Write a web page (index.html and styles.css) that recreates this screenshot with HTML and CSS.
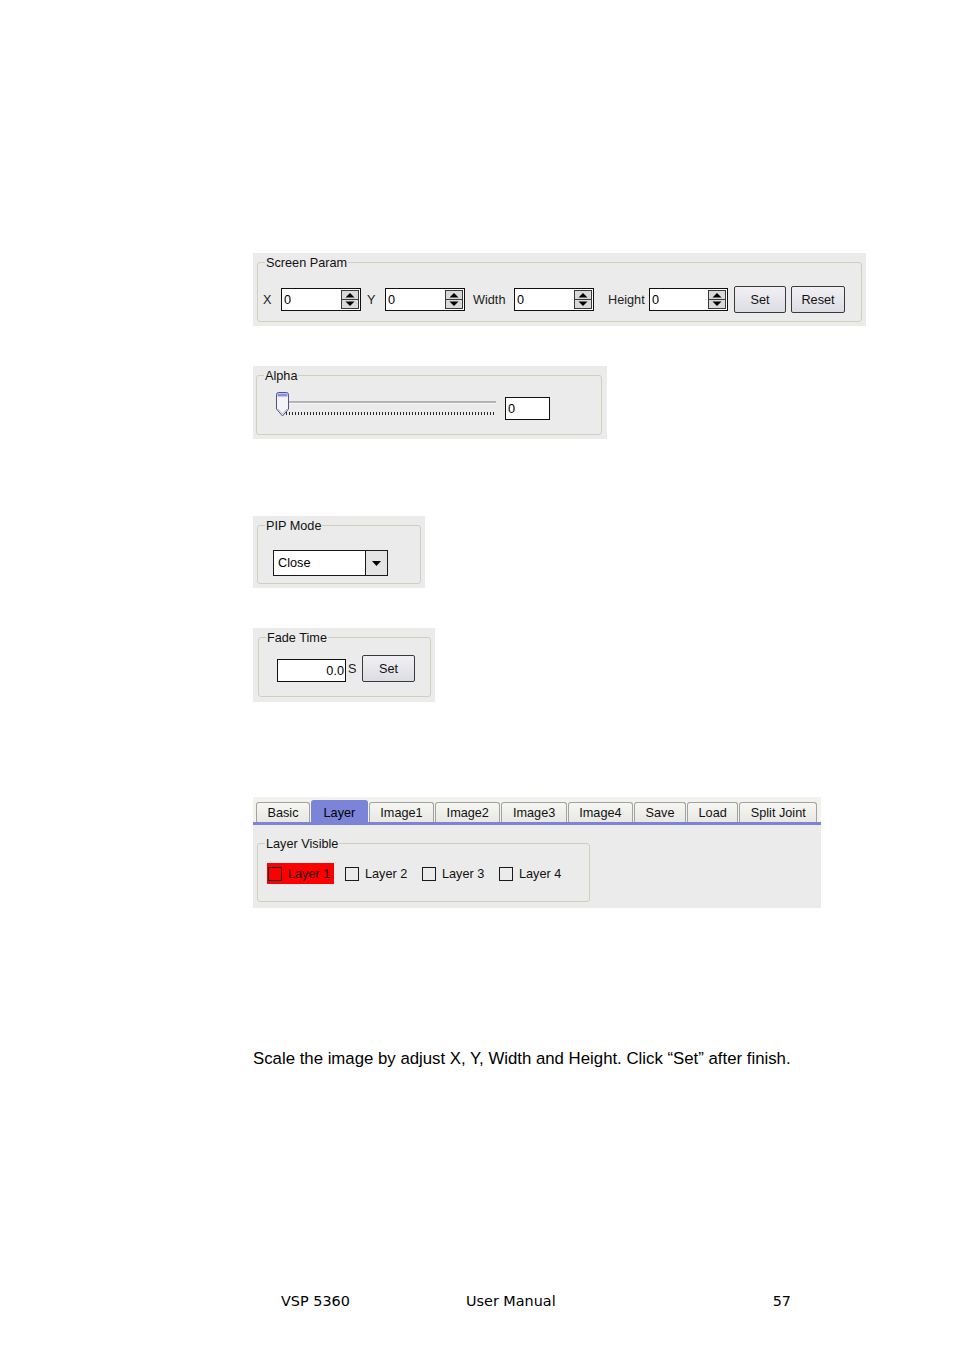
FILE: index.html
```html
<!DOCTYPE html>
<html>
<head>
<meta charset="utf-8">
<link rel="stylesheet" href="styles.css">
</head>
<body>
<div class="page">

  <div class="panel p1">
    <fieldset class="grp g1">
      <legend>Screen Param</legend>
      <div class="row r1">
        <span class="lbl lbl-x">X</span>
        <div class="spin-input w80 mr6"><span class="val">0</span>
          <svg class="spin" width="18" height="19" viewBox="0 0 18 19"><rect x="0.5" y="0.5" width="17" height="18" fill="#d9d9d9" stroke="#3a3a3a"/><line x1="0" y1="9.5" x2="18" y2="9.5" stroke="#3a3a3a"/><path d="M4.5 7.5 L9 3 L13.5 7.5 Z" fill="#000"/><path d="M4.5 11.5 L9 16 L13.5 11.5 Z" fill="#000"/></svg>
        </div>
        <span class="lbl lbl-y">Y</span>
        <div class="spin-input w80 mr8"><span class="val">0</span>
          <svg class="spin" width="18" height="19" viewBox="0 0 18 19"><rect x="0.5" y="0.5" width="17" height="18" fill="#d9d9d9" stroke="#3a3a3a"/><line x1="0" y1="9.5" x2="18" y2="9.5" stroke="#3a3a3a"/><path d="M4.5 7.5 L9 3 L13.5 7.5 Z" fill="#000"/><path d="M4.5 11.5 L9 16 L13.5 11.5 Z" fill="#000"/></svg>
        </div>
        <span class="lbl lbl-w">Width</span>
        <div class="spin-input w80 mr14"><span class="val">0</span>
          <svg class="spin" width="18" height="19" viewBox="0 0 18 19"><rect x="0.5" y="0.5" width="17" height="18" fill="#d9d9d9" stroke="#3a3a3a"/><line x1="0" y1="9.5" x2="18" y2="9.5" stroke="#3a3a3a"/><path d="M4.5 7.5 L9 3 L13.5 7.5 Z" fill="#000"/><path d="M4.5 11.5 L9 16 L13.5 11.5 Z" fill="#000"/></svg>
        </div>
        <span class="lbl lbl-h">Height</span>
        <div class="spin-input w79 mr6"><span class="val">0</span>
          <svg class="spin" width="18" height="19" viewBox="0 0 18 19"><rect x="0.5" y="0.5" width="17" height="18" fill="#d9d9d9" stroke="#3a3a3a"/><line x1="0" y1="9.5" x2="18" y2="9.5" stroke="#3a3a3a"/><path d="M4.5 7.5 L9 3 L13.5 7.5 Z" fill="#000"/><path d="M4.5 11.5 L9 16 L13.5 11.5 Z" fill="#000"/></svg>
        </div>
        <div class="btn b-set mr5">Set</div>
        <div class="btn b-reset">Reset</div>
      </div>
    </fieldset>
  </div>

  <div class="panel p2">
    <fieldset class="grp g2">
      <legend>Alpha</legend>
      <div class="row r2">
        <svg class="slider" width="221" height="25" viewBox="0 0 221 25">
          <line x1="13" y1="10" x2="220" y2="10" stroke="#b4b4b4" stroke-width="2"/>
          <line x1="13" y1="11.5" x2="220" y2="11.5" stroke="#f8f8f8" stroke-width="1"/>
          <line x1="7" y1="21.5" x2="218" y2="21.5" stroke="#2a2a2a" stroke-width="3" stroke-dasharray="1 2"/>
          <path d="M0.5 2.5 Q0.5 0.5 2.5 0.5 H10.5 Q12.5 0.5 12.5 2.5 V17 L6.5 24 L0.5 17 Z" fill="#f4f4f8" stroke="#50548a"/>
          <rect x="1.5" y="1.5" width="10" height="3" fill="#8a90e0"/>
          <path d="M2 17 L6.5 22 L11 17" fill="none" stroke="#b8bacc"/>
        </svg>
        <div class="text-input w45"><span class="val">0</span></div>
      </div>
    </fieldset>
  </div>

  <div class="panel p3">
    <fieldset class="grp g3">
      <legend>PIP Mode</legend>
      <div class="row r3">
        <div class="combo">
          <span class="combo-text">Close</span>
          <span class="combo-btn"><svg width="9" height="5" viewBox="0 0 9 5"><path d="M0 0 H9 L4.5 5 Z" fill="#000"/></svg></span>
        </div>
      </div>
    </fieldset>
  </div>

  <div class="panel p4">
    <fieldset class="grp g4">
      <legend>Fade Time</legend>
      <div class="row r4">
        <div class="text-input w69 right"><span class="val">0.0</span></div>
        <span class="lbl lbl-s">S</span>
        <div class="btn b-set2">Set</div>
      </div>
    </fieldset>
  </div>

  <div class="panel p5">
    <div class="tabbar">
      <div class="tab">Basic</div>
      <div class="tab sel">Layer</div>
      <div class="tab">Image1</div>
      <div class="tab">Image2</div>
      <div class="tab">Image3</div>
      <div class="tab">Image4</div>
      <div class="tab">Save</div>
      <div class="tab">Load</div>
      <div class="tab">Split Joint</div>
    </div>
    <fieldset class="grp g5">
      <legend>Layer Visible</legend>
      <div class="row r5">
        <div class="cb-item red"><span class="cb"></span><span>Layer 1</span></div>
        <div class="cb-item"><span class="cb"></span><span>Layer 2</span></div>
        <div class="cb-item"><span class="cb"></span><span>Layer 3</span></div>
        <div class="cb-item"><span class="cb"></span><span>Layer 4</span></div>
      </div>
    </fieldset>
  </div>

  <p class="desc">Scale the image by adjust X, Y, Width and Height. Click “Set” after finish.</p>

  <div class="footer">
    <span>VSP 5360</span>
    <span>User Manual</span>
    <span class="pg">57</span>
  </div>
</div>
</body>
</html>
```

FILE: styles.css
```css
html, body {
  margin: 0;
  padding: 0;
  background: #ffffff;
}

.page {
  padding: 253px 0 0 253px;
  font-family: "Liberation Sans", Arial, sans-serif;
  color: #000;
}

.panel {
  background: #ebebeb;
  box-sizing: border-box;
  font-size: 12.7px;
  line-height: 16px;
}

.grp {
  box-sizing: border-box;
  margin: 0;
  border: 1px solid #cfcfbf;
  border-radius: 3px;
  padding: 0 0 0 7px;
  min-width: 0;
}

.grp legend {
  padding: 2px 1px 0;
  font-size: 12.7px;
  line-height: 16px;
  color: #111;
}

.row {
  display: flex;
  align-items: center;
}

/* Panel 1 */
.p1 { width: 613px; height: 73px; padding: 0 0 0 4px; }
.g1 { width: 605px; height: 69px; padding-top: 15px; }
.r1 { height: 27px; }

.lbl { display: inline-block; white-space: nowrap; color: #222; }
.lbl-x { margin-left: -2px; width: 18px; }
.lbl-y { width: 18px; }
.lbl-w { width: 41px; }
.lbl-h { width: 41px; }

.spin-input, .text-input {
  box-sizing: border-box;
  height: 23px;
  background: #fff;
  border: 1px solid #111;
  display: flex;
  align-items: center;
  justify-content: space-between;
  padding: 0 1px 0 2px;
}
.val { line-height: 16px; }
.spin { display: block; }

.w80 { width: 80px; }
.w79 { width: 79px; }
.w45 { width: 45px; }
.w69 { width: 69px; }
.mr5 { margin-right: 5px; }
.mr6 { margin-right: 6px; }
.mr8 { margin-right: 8px; }
.mr14 { margin-right: 14px; }

.btn {
  box-sizing: border-box;
  height: 27px;
  border: 1px solid #3a3a3a;
  border-radius: 2px;
  background: linear-gradient(#f0f0f4, #dcdce4);
  display: flex;
  align-items: center;
  justify-content: center;
  color: #111;
}
.b-set { width: 52px; }
.b-reset { width: 54px; }
.b-set2 { width: 53px; }

/* Panel 2 */
.p2 { width: 354px; height: 73px; padding: 0 0 0 3px; margin-top: 40px; }
.g2 { width: 346px; height: 69px; padding-top: 8px; }
.r2 { align-items: flex-start; }
.slider { display: block; margin-left: 12px; margin-right: 8px; }
.r2 .text-input { margin-top: 5px; }

/* Panel 3 */
.p3 { width: 172px; height: 72px; padding: 0 0 0 4px; margin-top: 77px; }
.g3 { width: 164px; height: 68px; padding-top: 16px; }
.combo {
  box-sizing: border-box;
  margin-left: 8px;
  width: 115px;
  height: 26px;
  border: 1px solid #1a1a1a;
  background: #fff;
  display: flex;
}
.combo-text {
  flex: 1;
  display: flex;
  align-items: center;
  padding-left: 4px;
}
.combo-btn {
  width: 21px;
  border-left: 1px solid #1a1a1a;
  background: #e4e4e4;
  display: flex;
  align-items: center;
  justify-content: center;
}
.combo-btn svg { display: block; }

/* Panel 4 */
.p4 { width: 182px; height: 74px; padding: 0 0 0 5px; margin-top: 40px; }
.g4 { width: 173px; height: 69px; padding-top: 9px; }
.r4 { align-items: flex-end; height: 27px; }
.r4 .text-input { margin-left: 11px; }
.right { justify-content: flex-end; }
.lbl-s { width: 14px; margin-left: 2px; align-self: center; }

/* Panel 5 */
.p5 { width: 568px; height: 111px; margin-top: 95px; }
.tabbar {
  height: 28px;
  box-sizing: border-box;
  background: #f2f2ee;
  border-bottom: 3px solid #7b84d8;
  display: flex;
  align-items: flex-end;
  gap: 1px;
  padding-left: 3px;
}
.tab {
  box-sizing: border-box;
  height: 20px;
  padding: 0 10.5px;
  border: 1px solid #a2a2a2;
  border-bottom: none;
  border-radius: 3px 3px 0 0;
  background: linear-gradient(#f6f6f2, #e8e8e3);
  display: flex;
  align-items: center;
  white-space: nowrap;
  color: #111;
}
.tab.sel {
  height: 22px;
  padding: 2px 11.5px 0;
  background: #7b84d8;
  border-color: #7b84d8;
  color: #000;
}
.g5 {
  width: 333px;
  height: 68px;
  margin: 9px 0 0 4px;
  padding-top: 11px;
}
.r5 { height: 21px; }
.cb-item {
  box-sizing: border-box;
  width: 67px;
  height: 21px;
  margin-right: 10px;
  padding-left: 1px;
  display: flex;
  align-items: center;
  gap: 6px;
  white-space: nowrap;
  color: #111;
}
.r5 .cb-item:first-child { margin-left: 2px; }
.cb-item.red { background: #ff0000; color: #2a0000; }
.cb {
  box-sizing: border-box;
  width: 14px;
  height: 14px;
  border: 1px solid #1a1a1a;
  flex: none;
}

.desc {
  margin: 142px 0 0 0;
  font-size: 16.8px;
  line-height: 18px;
  color: #000;
}

.footer {
  margin: 225px 0 0 28px;
  width: 510px;
  display: grid;
  grid-template-columns: 185px 1fr auto;
  font-family: "DejaVu Sans", Verdana, sans-serif;
  font-size: 14.4px;
  line-height: 17px;
  color: #000;
}
```
